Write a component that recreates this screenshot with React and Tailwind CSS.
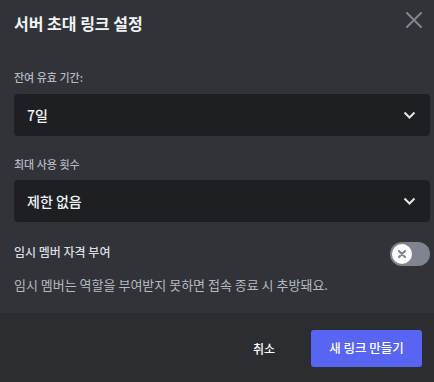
export default function App() {
  const font = { fontFamily: '"Noto Sans CJK KR", "Noto Sans", sans-serif' };
  return (
    <div
      className="w-[434px] h-[382px] bg-[#313338] flex flex-col overflow-hidden"
      style={font}
    >
      <div className="flex items-start justify-between pl-[14px] pr-[12px] pt-[12px]">
        <h1 className="text-[16px] leading-[22px] font-bold text-[#f2f3f5]">서버 초대 링크 설정</h1>
        <svg width="16" height="16" viewBox="0 0 16 16" className="mt-[0px]">
          <path d="M1 1L15 15M15 1L1 15" stroke="#80848e" strokeWidth="2" strokeLinecap="square" />
        </svg>
      </div>

      <div className="flex flex-col pl-[14px] pr-[4px]">
        <label className="mt-[35px] text-[11px] leading-[16px] font-medium text-[#b5bac1]">잔여 유효 기간:</label>
        <div className="mt-[9px] h-[42px] rounded-[4px] bg-[#1e1f22] flex items-center justify-between pl-[13px] pr-[14px]">
          <span className="text-[14px] font-medium text-[#f2f3f5]">7일</span>
          <svg width="13" height="8" viewBox="0 0 13 8">
            <path d="M1.5 1.5L6.5 6.5L11.5 1.5" fill="none" stroke="#e3e5e8" strokeWidth="2" />
          </svg>
        </div>

        <label className="mt-[20px] text-[11px] leading-[16px] font-medium text-[#b5bac1]">최대 사용 횟수</label>
        <div className="mt-[8px] h-[42px] rounded-[4px] bg-[#1e1f22] flex items-center justify-between pl-[13px] pr-[14px]">
          <span className="text-[14px] font-medium text-[#f2f3f5]">제한 없음</span>
          <svg width="13" height="8" viewBox="0 0 13 8">
            <path d="M1.5 1.5L6.5 6.5L11.5 1.5" fill="none" stroke="#e3e5e8" strokeWidth="2" />
          </svg>
        </div>

        <div className="mt-[20px] h-[24px] flex items-center justify-between">
          <span className="text-[12px] leading-[20px] font-medium text-[#dbdee1] pb-[4px]">임시 멤버 자격 부여</span>
          <div className="w-[40px] h-[24px] rounded-full bg-[#80848e] flex items-center pl-[2px]">
            <div className="w-[20px] h-[20px] rounded-full bg-white flex items-center justify-center">
              <svg width="10" height="10" viewBox="0 0 10 10">
                <path d="M2 2L8 8M8 2L2 8" stroke="#80848e" strokeWidth="2.2" strokeLinecap="round" />
              </svg>
            </div>
          </div>
        </div>

        <p className="mt-[10px] text-[13px] leading-[18px] text-[#b5bac1]">
          임시 멤버는 역할을 부여받지 못하면 접속 종료 시 추방돼요.
        </p>
      </div>

      <div className="mt-auto h-[69px] bg-[#2b2d31] flex items-start justify-end pt-[17px] pr-[12px]">
        <span className="mr-[36px] h-[37px] flex items-center text-[12px] font-medium text-white">취소</span>
        <button className="w-[111px] h-[37px] rounded-[3px] bg-[#5865f2] text-[12.5px] font-medium text-white flex items-center justify-center">
          새 링크 만들기
        </button>
      </div>
    </div>
  );
}
